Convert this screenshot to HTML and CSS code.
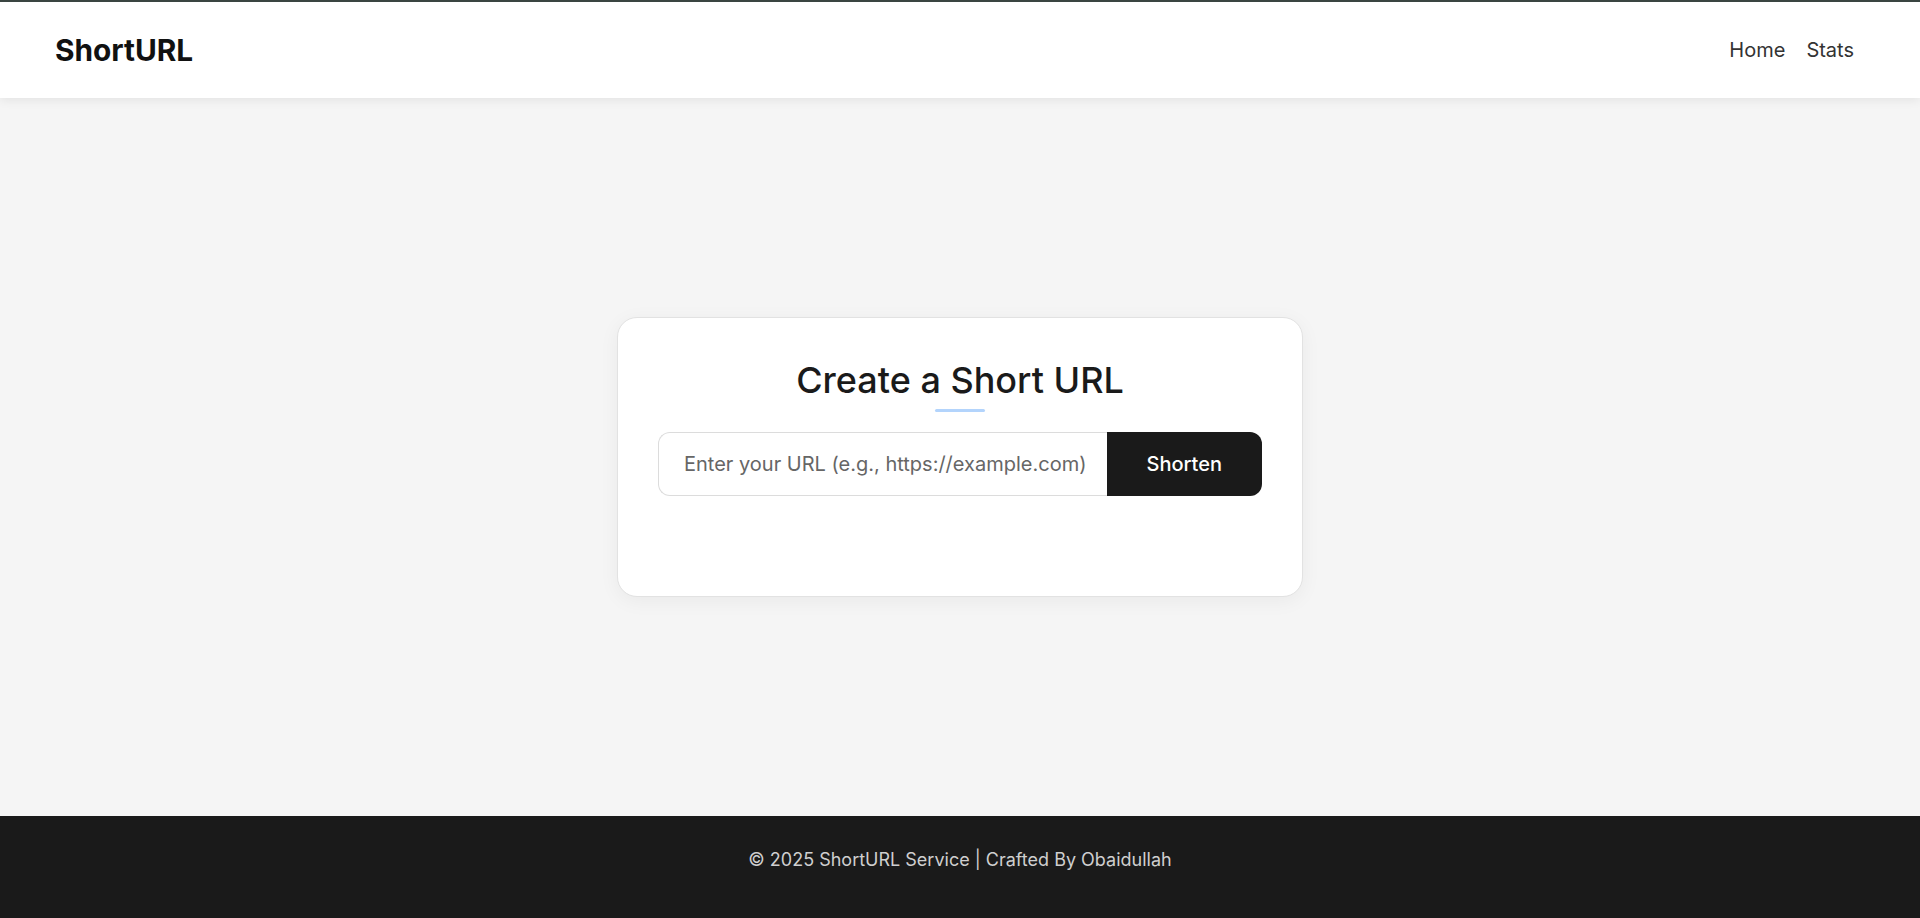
FILE: index.html
```html
<!DOCTYPE html>
<html lang="en">
<head>
<meta charset="utf-8">
<title>ShortURL</title>
<link rel="stylesheet" href="styles.css">
</head>
<body>
<div class="page">
  <header class="header">
    <a class="logo" href="#">ShortURL</a>
    <nav class="nav">
      <a href="#">Home</a>
      <a href="#">Stats</a>
    </nav>
  </header>
  <main class="main">
    <section class="card">
      <h1 class="title">Create a Short URL</h1>
      <div class="accent"></div>
      <form class="form">
        <input class="url-input" type="text" placeholder="Enter your URL (e.g., https://example.com)">
        <button class="btn" type="button">Shorten</button>
      </form>
      <div class="result"></div>
    </section>
  </main>
  <footer class="footer">© 2025 ShortURL Service | Crafted By Obaidullah</footer>
</div>
</body>
</html>
```

FILE: styles.css
```css
* { box-sizing: border-box; }
html, body { margin: 0; padding: 0; height: 100%; }
body {
  font-family: Inter, "Noto Sans", sans-serif;
  background: #f5f5f5;
  color: #1a1a1a;
}
.page {
  min-height: 100vh;
  display: flex;
  flex-direction: column;
}
.header {
  height: 98px;
  background: #fff;
  border-top: 2px solid #3a4541;
  display: flex;
  align-items: center;
  justify-content: space-between;
  padding: 0 66px 0 55px;
  box-shadow: 0 2px 10px rgba(0,0,0,0.08);
  position: relative;
  z-index: 1;
}
.logo {
  font-size: 29.8px;
  font-weight: 700;
  color: #111;
  text-decoration: none;
}
.nav { display: flex; gap: 21px; }
.nav a {
  font-size: 20px;
  color: #333;
  text-decoration: none;
}
.main {
  flex: 1;
  display: flex;
  align-items: center;
  justify-content: center;
}
.card {
  width: 686px;
  background: #fff;
  border: 1px solid #e2e2e2;
  border-radius: 20px;
  padding: 41px 40px 40px;
  box-shadow: 0 4px 20px rgba(0,0,0,0.05);
  display: flex;
  flex-direction: column;
  align-items: center;
}
.title {
  margin: 0;
  font-size: 36px;
  font-weight: 500;
  color: #1a1a1a;
  line-height: 1.2;
}
.accent {
  width: 50px;
  height: 3px;
  background: #b3d4fc;
  border-radius: 2px;
  margin-top: 6px;
}
.form {
  margin-top: 20px;
  display: flex;
  width: 100%;
  height: 64px;
}
.url-input {
  flex: 1;
  min-width: 0;
  border: 1px solid #dcdcdc;
  border-right: none;
  border-radius: 12px 0 0 12px;
  padding: 0 20px 0 25px;
  font-family: inherit;
  font-size: 20px;
  color: #333;
  background: #fff;
  outline: none;
}
.url-input::placeholder { color: #666; }
.btn {
  border: none;
  background: #1a1a1a;
  color: #fff;
  font-family: inherit;
  font-size: 20px;
  font-weight: 500;
  padding: 0 40px;
  border-radius: 0 12px 12px 0;
  cursor: pointer;
}
.result { height: 60px; }
.footer {
  height: 102px;
  background: #1a1a1a;
  color: #cfcfcf;
  font-size: 18px;
  display: flex;
  align-items: center;
  justify-content: center;
  padding-bottom: 16px;
}
```
